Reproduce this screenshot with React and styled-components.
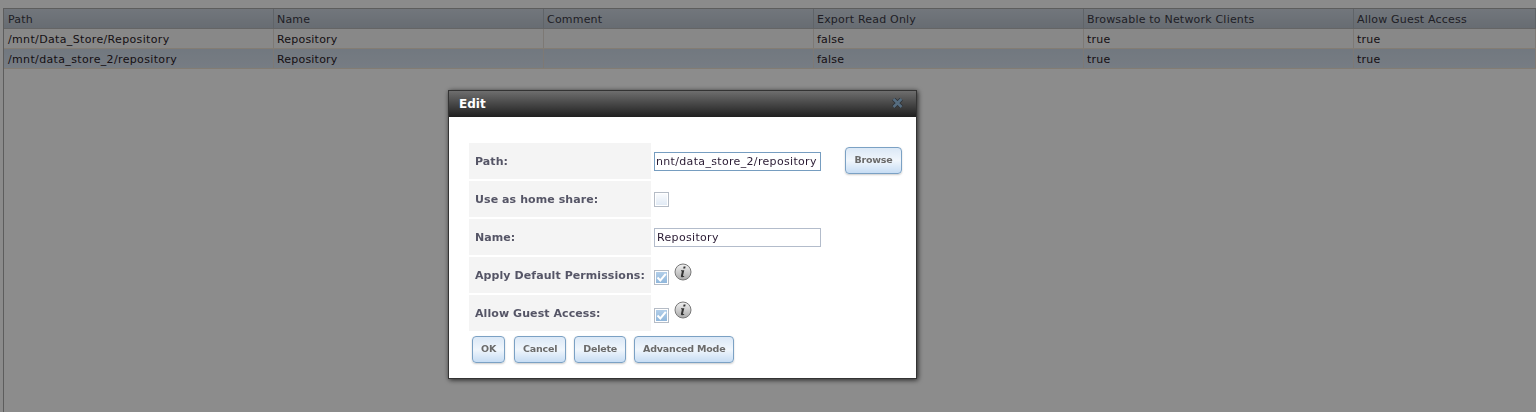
import styled, { createGlobalStyle } from 'styled-components';

const GlobalStyle = createGlobalStyle`
  html, body {
    margin: 0;
    height: 100%;
    background: #fff;
    overflow: hidden;
    font-family: "DejaVu Sans", Verdana, sans-serif;
  }
`;

const columns = [
  { title: 'Path', width: 270, spacing: 0.35 },
  { title: 'Name', width: 270, spacing: 0.2 },
  { title: 'Comment', width: 270, spacing: 0.2 },
  { title: 'Export Read Only', width: 270, spacing: 0.2 },
  { title: 'Browsable to Network Clients', width: 270, spacing: 0.2 },
  { title: 'Allow Guest Access', width: 182, spacing: 0.2 },
];

const rows = [
  { cells: ['/mnt/Data_Store/Repository', 'Repository', '', 'false', 'true', 'true'] },
  { cells: ['/mnt/data_store_2/repository', 'Repository', '', 'false', 'true', 'true'], selected: true },
];

const InfoIcon = () => (
  <svg width="18" height="18" viewBox="0 0 18 18">
    <defs>
      <linearGradient id="infoFill" x1="0" y1="0" x2="0" y2="1">
        <stop offset="0" stopColor="#f2f2f2" />
        <stop offset="1" stopColor="#a9a9a9" />
      </linearGradient>
    </defs>
    <circle cx="9" cy="9" r="8" fill="url(#infoFill)" stroke="#777" />
    <path d="M9.600 3.600h2l-.4 1.900h-2zM7 7.300h3.300L9 12.600c-.1.500.3.600 1.300.3l-.2.900c-.8.400-3.400.8-3.200-.9l1-4.600H7z" fill="#333" />
  </svg>
);

const CheckMark = () => (
  <svg width="11" height="11" viewBox="0 0 11 11">
    <path d="M1.500 5.500l2.800 3L9.800 1.800" fill="none" stroke="#fff" strokeWidth="2" />
  </svg>
);

const CloseMark = () => (
  <CloseIcon width="11" height="10" viewBox="0 0 11 10">
    <path d="M1.500 1l8 8M9.500 1l-8 8" fill="none" stroke="#2c3034" strokeWidth="4" />
    <path d="M1.500 1l8 8M9.500 1l-8 8" fill="none" stroke="#566d80" strokeWidth="2.600" />
  </CloseIcon>
);

export default function App() {
  return (
    <>
      <GlobalStyle />
      <Page>
        <Grid>
          <HeaderRow>
            {columns.map((c) => (
              <HeaderCell key={c.title} $width={c.width}>{c.title}</HeaderCell>
            ))}
          </HeaderRow>
          {rows.map((r) => (
            <DataRow key={r.cells[0]} $selected={r.selected}>
              {r.cells.map((text, i) => (
                <DataCell key={i} $width={columns[i].width} $spacing={columns[i].spacing}>{text}</DataCell>
              ))}
            </DataRow>
          ))}
        </Grid>
      </Page>
      <Overlay />
      <Dialog>
        <TitleBar>
          <DialogTitle>Edit</DialogTitle>
          <CloseMark />
        </TitleBar>
        <DialogBody>
          <FormRow>
            <Label>Path:</Label>
            <Field>
              <TextInput $focused readOnly value="nnt/data_store_2/repository" />
              <BrowseButton>Browse</BrowseButton>
            </Field>
          </FormRow>
          <FormRow>
            <Label>Use as home share:</Label>
            <Field>
              <CheckBox />
            </Field>
          </FormRow>
          <FormRow>
            <Label>Name:</Label>
            <Field>
              <TextInput readOnly value="Repository" />
            </Field>
          </FormRow>
          <FormRow>
            <Label>Apply Default Permissions:</Label>
            <Field>
              <CheckBox $checked><CheckMark /></CheckBox>
              <InfoWrap><InfoIcon /></InfoWrap>
            </Field>
          </FormRow>
          <FormRow>
            <Label>Allow Guest Access:</Label>
            <Field>
              <CheckBox $checked><CheckMark /></CheckBox>
              <InfoWrap><InfoIcon /></InfoWrap>
            </Field>
          </FormRow>
          <Buttons>
            <OkButton>OK</OkButton>
            <Button>Cancel</Button>
            <Button>Delete</Button>
            <Button>Advanced Mode</Button>
          </Buttons>
        </DialogBody>
      </Dialog>
    </>
  );
}

const Page = styled.div`
  height: 412px;
  padding: 8px 0 0 3px;
  box-sizing: border-box;
  background: #fdfdfd;
`;

const Grid = styled.div`
  height: 404px;
  border-left: 1px solid #aaa;
  border-top: 1px solid #aaa;
  box-sizing: border-box;
  background: #fff;
`;

const HeaderRow = styled.div`
  display: flex;
  height: 19px;
  background: linear-gradient(#d0d8e2, #bcc5d0);
  border-bottom: 1px solid #b9b9b9;
`;

const HeaderCell = styled.div`
  width: ${(p) => p.$width}px;
  flex-shrink: 0;
  box-sizing: border-box;
  padding-left: 3px;
  border-right: 1px solid #b0b6bd;
  font-size: 11px;
  letter-spacing: 0.2px;
  line-height: 21px;
  color: #3a3a46;

  &:first-child {
    padding-left: 4px;
  }
`;

const DataRow = styled.div`
  display: flex;
  height: 19px;
  background: ${(p) => (p.$selected ? 'linear-gradient(#cfdbe9, #d9e3ef)' : '#f8f8f8')};
  border-bottom: 1px solid #efe2d2;
`;

const DataCell = styled.div`
  width: ${(p) => p.$width}px;
  flex-shrink: 0;
  box-sizing: border-box;
  padding-left: 3px;
  border-right: 1px solid #e4ddd6;
  font-size: 11px;
  letter-spacing: ${(p) => p.$spacing}px;
  line-height: 21px;
  color: #2a1b28;

  &:first-child {
    padding-left: 4px;
  }
`;

const Overlay = styled.div`
  position: fixed;
  inset: 0;
  background: rgba(0, 0, 0, 0.45);
`;

const Dialog = styled.div`
  position: fixed;
  left: 448px;
  top: 90px;
  width: 469px;
  height: 289px;
  box-sizing: border-box;
  border: 1px solid #333;
  background: #fff;
  box-shadow: 1px 1px 5px rgba(0, 0, 0, 0.75);
`;

const TitleBar = styled.div`
  display: flex;
  align-items: center;
  justify-content: space-between;
  height: 26px;
  padding: 0 13px 0 10px;
  box-sizing: border-box;
  background: linear-gradient(#6e6e6e, #1f1f1f);
`;

const CloseIcon = styled.svg`
  margin-top: -2px;
`;

const DialogTitle = styled.span`
  font-size: 12px;
  font-weight: bold;
  color: #fff;
`;

const DialogBody = styled.div`
  padding: 26px 20px 0;
  display: flex;
  flex-direction: column;
  gap: 2px;
`;

const FormRow = styled.div`
  display: flex;
  height: 36px;
  gap: 3px;
`;

const Label = styled.div`
  width: 182px;
  flex-shrink: 0;
  box-sizing: border-box;
  padding-left: 6px;
  display: flex;
  align-items: center;
  background: #f4f4f4;
  font-size: 11px;
  font-weight: bold;
  letter-spacing: 0.08px;
  color: #555566;
  white-space: nowrap;
`;

const Field = styled.div`
  display: flex;
  align-items: center;
  position: relative;
  flex: 1;
`;

const TextInput = styled.input`
  width: 167px;
  height: 19px;
  box-sizing: border-box;
  padding: 0 2px 0 ${(p) => (p.$focused ? 1 : 2)}px;
  margin: 0;
  border: 1px solid ${(p) => (p.$focused ? '#769dc0' : '#b3bccb')};
  background: #fff;
  outline: none;
  font-family: "DejaVu Sans", Verdana, sans-serif;
  font-size: 11px;
  letter-spacing: 0.33px;
  color: #2a1b33;
`;

const CheckBox = styled.div`
  width: 15px;
  height: 15px;
  box-sizing: border-box;
  margin-top: ${(p) => (p.$checked ? 5 : 1)}px;
  display: flex;
  align-items: center;
  justify-content: center;
  border: 1px solid #b5bcc6;
  background: ${(p) => (p.$checked ? 'linear-gradient(#b5d0ea, #8db5da)' : 'linear-gradient(#fbfcfe, #dfe9f4)')};
  box-shadow: inset 0 0 0 1px #fff;
`;

const InfoWrap = styled.span`
  display: flex;
  margin: -7px 0 0 5px;
`;

const Button = styled.button`
  height: 27px;
  padding: 0 8px 2px;
  margin: 0;
  box-sizing: border-box;
  border: 1px solid #7ba1c4;
  border-radius: 4px;
  background: linear-gradient(#dbe8f6, #f0f6fc 50%, #c7ddf4);
  box-shadow: 0 1px 2px rgba(0, 0, 0, 0.2);
  font-family: "DejaVu Sans", Verdana, sans-serif;
  font-size: 9.500px;
  letter-spacing: -0.2px;
  font-weight: bold;
  color: #6a6a6a;
`;

const OkButton = styled(Button)`
  width: 33px;
  margin-right: 1px;
`;

const BrowseButton = styled(Button)`
  width: 57px;
  margin: -2px 0 0 24px;
`;

const Buttons = styled.div`
  display: flex;
  gap: 8px;
  padding: 3px 0 0 3px;
`;
